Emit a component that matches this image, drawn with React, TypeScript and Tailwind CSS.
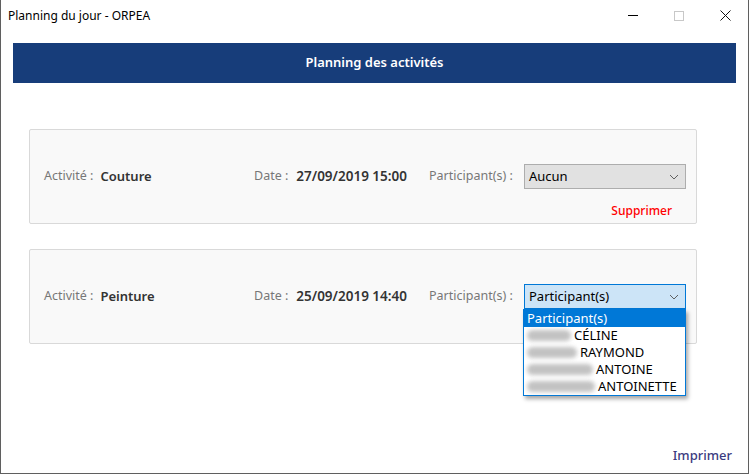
import React from 'react';

const font = { fontFamily: '"Noto Sans", "Open Sans", sans-serif' };

function Chevron() {
  return (
    <svg width="10" height="6" viewBox="0 0 10 6" className="text-[#606060]">
      <path d="M1 1l4 4 4-4" fill="none" stroke="currentColor" strokeWidth="1" />
    </svg>
  );
}

function Blur({ w }: { w: number }) {
  return (
    <span
      className="mr-[3px] inline-block h-[11px] rounded-full bg-[#9a9a9a] opacity-60 blur-[2px]"
      style={{ width: w }}
    />
  );
}

function Card({
  activity,
  date,
  open,
}: {
  activity: string;
  date: string;
  open?: boolean;
}) {
  return (
    <div className="flex h-[95px] flex-col rounded-[2px] border border-[#d9d9d9] bg-[#f9f9f9] pl-[14px] pt-[34px]">
      <div className="flex h-[25px] items-center text-[12.5px]">
        <div className="flex w-[210px] items-center">
          <span className="text-[#777777]">Activité :</span>
          <span className="ml-[7px] text-[13px] font-semibold text-[#333333]">{activity}</span>
        </div>
        <div className="flex w-[175px] items-center">
          <span className="text-[#777777]">Date :</span>
          <span className="ml-[8px] text-[13.5px] font-semibold text-[#333333]">{date}</span>
        </div>
        <span className="w-[95px] text-[#777777]">Participant(s) :</span>
        <div className="relative">
          {open ? (
            <>
              <div className="flex h-[25px] w-[162px] items-center justify-between border border-[#0078d7] bg-[#cce4f7] pl-[4px] pr-[6px] text-[13px] text-black">
                <span>Participant(s)</span>
                <Chevron />
              </div>
              <div className="absolute left-[-1px] top-[25px] z-10 w-[163px] border border-[#0078d7] bg-white text-[13px] leading-[17px] text-black shadow-[2px_3px_4px_rgba(0,0,0,0.35)]">
                <div className="bg-[#0078d7] pl-[3px] text-white">Participant(s)</div>
                <div className="flex items-center pl-[3px]"><Blur w={44} />CÉLINE</div>
                <div className="flex items-center pl-[3px]"><Blur w={50} />RAYMOND</div>
                <div className="flex items-center pl-[3px]"><Blur w={66} />ANTOINE</div>
                <div className="flex items-center pl-[3px]"><Blur w={68} />ANTOINETTE</div>
              </div>
            </>
          ) : (
            <div className="flex h-[25px] w-[162px] items-center justify-between border border-[#adadad] bg-[#e1e1e1] pl-[4px] pr-[6px] text-[13px] text-black">
              <span>Aucun</span>
              <Chevron />
            </div>
          )}
        </div>
      </div>
      {!open && (
        <div className="mt-[13px] flex justify-end pr-[24px] text-[12px] font-medium text-[#ff0000]">
          Supprimer
        </div>
      )}
    </div>
  );
}

export default function App() {
  return (
    <div
      className="flex h-[474px] w-[749px] flex-col border-x border-b border-[#5f5f5f] bg-white"
      style={font}
    >
      <div className="flex h-[31px] items-center justify-between">
        <span className="pl-[7px] text-[12px] text-black">Planning du jour - ORPEA</span>
        <div className="flex h-full">
          <div className="flex w-[46px] items-center justify-center">
            <div className="h-px w-[10px] bg-black" />
          </div>
          <div className="flex w-[46px] items-center justify-center">
            <div className="h-[10px] w-[10px] border border-[#c8c8c8]" />
          </div>
          <div className="flex w-[46px] items-center justify-center">
            <svg width="11" height="11" viewBox="0 0 11 11">
              <path d="M0.5 0.5l10 10M10.5 0.5l-10 10" stroke="#111" strokeWidth="1" />
            </svg>
          </div>
        </div>
      </div>

      <div className="flex flex-1 flex-col px-[12px] pt-[12px]">
        <div className="flex h-[40px] items-center justify-center bg-[#173d7a] text-[13px] font-semibold text-white">
          Planning des activités
        </div>

        <div className="mt-[46px] flex flex-col gap-[25px] pl-[16px] pr-[39px]">
          <Card activity="Couture" date="27/09/2019 15:00" />
          <Card activity="Peinture" date="25/09/2019 14:40" open />
        </div>

        <div className="mt-auto flex justify-end pb-[8px] pr-[4px]">
          <span className="text-[13px] font-medium text-[#3b3b80]">Imprimer</span>
        </div>
      </div>
    </div>
  );
}
